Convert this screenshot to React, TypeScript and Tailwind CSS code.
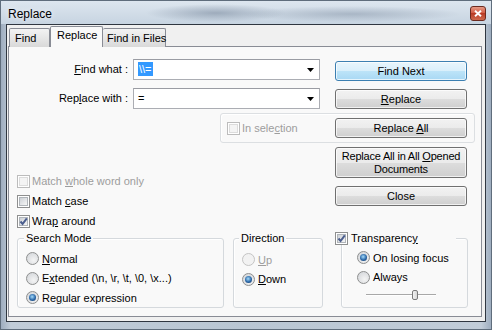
import React from "react";
import clsx from "clsx";

const U = ({ c }: { c: string }) => <span className="underline underline-offset-[1px]">{c}</span>;

function Check({ checked, disabled }: { checked?: boolean; disabled?: boolean }) {
    return (
        <span
            className={clsx(
                "relative flex h-[13px] w-[13px] shrink-0 border bg-white p-[1px]",
                disabled ? "border-[#bcbcbc]" : "border-[#8e8f8f]"
            )}
        >
            <span
                className={clsx(
                    "block h-full w-full border",
                    disabled
                        ? "border-[#dcdcdc] bg-[#f4f4f4]"
                        : "border-[#b0b5ba] bg-[linear-gradient(135deg,#cdd1d6,#f6f6f6)]"
                )}
            />
            {checked && (
                <svg className="absolute left-0 top-0" width="11" height="11" viewBox="0 0 11 11">
                    <path d="M2.5 5.5 L4.6 8 L8.8 2.4" fill="none" stroke="#4b5e8e" strokeWidth="2" />
                </svg>
            )}
        </span>
    );
}

function Radio({ on, disabled }: { on?: boolean; disabled?: boolean }) {
    return (
        <span
            className={clsx(
                "flex h-[13px] w-[13px] shrink-0 items-center justify-center rounded-full border",
                disabled
                    ? "border-[#c4c4c4] bg-[#f2f2f2]"
                    : "border-[#8e8f8f] bg-[radial-gradient(circle_at_60%_65%,#f4f4f4,#cfd2d6)]"
            )}
        >
            {on && (
                <span className="block h-[7px] w-[7px] rounded-full bg-[radial-gradient(circle_at_45%_40%,#a6dcfb,#2b68a8_55%,#0e2c57)]" />
            )}
        </span>
    );
}

function Btn({ children, def, className }: { children: React.ReactNode; def?: boolean; className?: string }) {
    return (
        <div
            className={clsx(
                "flex w-[132px] shrink-0 items-center justify-center rounded-[3px] border text-center shadow-[inset_0_0_0_1px_rgba(255,255,255,0.7)]",
                def
                    ? "border-[#3c7fb1] bg-[linear-gradient(#e8f5fc,#d9effb_50%,#bde4f8_50%,#a8d8f4)]"
                    : "border-[#707070] bg-[linear-gradient(#f2f2f2,#ebebeb_50%,#dddddd_50%,#cfcfcf)]",
                className
            )}
        >
            {children}
        </div>
    );
}

function Combo({ children }: { children: React.ReactNode }) {
    return (
        <div className="ml-[5px] flex h-[21px] w-[187px] items-center border border-[#abadb3] border-t-[#9a9ca3] bg-white pl-[4px] pr-[5px]">
            <div className="flex-1">{children}</div>
            <svg width="7" height="4" viewBox="0 0 7 4">
                <path d="M0 0 H7 L3.5 4 Z" fill="#000" />
            </svg>
        </div>
    );
}

function Group({ label, className, children }: { label: React.ReactNode; className?: string; children: React.ReactNode }) {
    return (
        <div className={clsx("relative h-[70px] shrink-0 rounded-[3px] border border-[#d5d9dd] shadow-[inset_1px_1px_0_#fff]", className)}>
            {label}
            {children}
        </div>
    );
}

export default function App() {
    return (
        <div className="h-[330px] w-[492px] overflow-hidden border border-[#5f6d7c] bg-[linear-gradient(90deg,#9eadbf,#c1ccd8_2%,#b9c6d3_50%,#c1ccd8_98%,#9eadbf)] font-['Liberation_Sans',Arial,sans-serif] text-[11px] text-black">
            <div className="flex h-[23px] items-center justify-between bg-[radial-gradient(ellipse_70px_9px_at_215px_12px,rgba(95,112,135,0.45),transparent),radial-gradient(ellipse_110px_8px_at_350px_13px,rgba(95,112,135,0.35),transparent),linear-gradient(#dde6ef,#c7d4e1)] pl-[7px] pr-[5px]">
                <span className="pt-[2px] text-[12px] [text-shadow:0_0_6px_#fff]">Replace</span>
                <div className="mt-[2px] flex h-[15px] w-[16px] items-center justify-center rounded-[3px] border border-[#6b2a1f] bg-[linear-gradient(#e69a86,#d0563e_50%,#b93c26_50%,#cf6a4e)]">
                    <svg width="8" height="7" viewBox="0 0 8 7">
                        <path d="M1 0.8 L7 6.2 M7 0.8 L1 6.2" stroke="#fff" strokeWidth="1.9" />
                    </svg>
                </div>
            </div>

            <div className="ml-[5px] h-[298px] w-[480px] border border-[#2f3640] bg-[#f0f0f0]">
                <div className="relative z-10 mb-[-1px] ml-[2px] flex h-[22px] items-end whitespace-nowrap">
                    <div className="flex h-[19px] w-[41px] items-center rounded-t-[2px] border border-b-0 border-[#898c95] bg-[linear-gradient(#f3f3f3,#e6e6e6_50%,#d9d9d9)] pl-[5px]">
                        Find
                    </div>
                    <div className="flex h-[21px] w-[53px] items-center rounded-t-[2px] border border-b-0 border-[#898c95] bg-[#f9f9f9] pb-[3px] pl-[6px]">
                        Replace
                    </div>
                    <div className="flex h-[19px] w-[63px] items-center rounded-t-[2px] border border-b-0 border-l-0 border-[#898c95] bg-[linear-gradient(#f3f3f3,#e6e6e6_50%,#d9d9d9)] pl-[4px]">
                        <span>Find in Files</span>
                    </div>
                </div>

                <div className="ml-[1px] flex h-[271px] w-[474px] flex-col border border-[#898c95] bg-[#f9f9f9]">
                    <div className="mt-[12px] flex h-[21px]">
                        <div className="w-[119px] text-right leading-[21px]">
                            <U c="F" />ind what :
                        </div>
                        <Combo>
                            <span className="bg-[#3399ff] px-[1px] py-[1px] text-white">\\=</span>
                        </Combo>
                        <Btn def className="ml-[15px] mt-[2px] h-[20px]">
                            <span>Find Next</span>
                        </Btn>
                    </div>

                    <div className="mt-[8px] flex h-[21px]">
                        <div className="w-[119px] text-right leading-[21px]">
                            Rep<U c="l" />ace with :
                        </div>
                        <Combo>=</Combo>
                        <Btn className="ml-[15px] mt-[1px] h-[20px]">
                            <span>
                                <U c="R" />eplace
                            </span>
                        </Btn>
                    </div>

                    <div className="ml-[211px] mt-[4px] flex h-[30px] w-[255px] items-center rounded-[3px] border border-[#dcdfe2] shadow-[inset_1px_1px_0_#fff]">
                        <div className="ml-[6px] flex items-center text-[#9d9d9d]">
                            <Check disabled />
                            <span className="ml-[2px]">
                                In sele<U c="c" />tion
                            </span>
                        </div>
                        <Btn className="ml-auto mr-[7px] h-[20px]">
                            <span>
                                Replace <U c="A" />ll
                            </span>
                        </Btn>
                    </div>

                    <div className="flex">
                        <div className="flex w-[326px] flex-col pl-[8px] pt-[28px]">
                            <div className="flex h-[20px] items-center text-[#9d9d9d]">
                                <Check disabled />
                                <span className="ml-[2px]">
                                    Match <U c="w" />hole word only
                                </span>
                            </div>
                            <div className="flex h-[20px] items-center">
                                <Check />
                                <span className="ml-[2px]">
                                    Match <U c="c" />ase
                                </span>
                            </div>
                            <div className="flex h-[20px] items-center">
                                <Check checked />
                                <span className="ml-[2px]">
                                    Wra<U c="p" /> around
                                </span>
                            </div>
                        </div>
                        <div className="flex flex-col pt-[4px]">
                            <Btn className="h-[31px] flex-col leading-[13px] tracking-[-0.2px]">
                                <span>
                                    Replace All in All <U c="O" />pened
                                </span>
                                <span>Documents</span>
                            </Btn>
                            <Btn className="mt-[8px] h-[20px]">
                                <span>Close</span>
                            </Btn>
                        </div>
                    </div>

                    <div className="ml-[8px] mt-[7px] flex">
                        <Group
                            className="w-[207px] pt-[10px]"
                            label={<span className="absolute left-[6px] top-[-7px] bg-[#f9f9f9] px-[2px] leading-[13px]">Search Mode</span>}
                        >
                            <div className="flex h-[19.5px] items-center pl-[8px]">
                                <Radio />
                                <span className="ml-[3px]">
                                    <U c="N" />ormal
                                </span>
                            </div>
                            <div className="flex h-[19.5px] items-center pl-[8px]">
                                <Radio />
                                <span className="ml-[3px]">
                                    E<U c="x" />tended (\n, \r, \t, \0, \x...)
                                </span>
                            </div>
                            <div className="flex h-[19.5px] items-center pl-[8px]">
                                <Radio on />
                                <span className="ml-[3px]">
                                    Re<U c="g" />ular expression
                                </span>
                            </div>
                        </Group>

                        <Group
                            className="ml-[9px] w-[90px] pt-[11px]"
                            label={<span className="absolute left-[5px] top-[-7px] bg-[#f9f9f9] px-[2px] leading-[13px]">Direction</span>}
                        >
                            <div className="flex h-[19.5px] items-center pl-[8px] text-[#9d9d9d]">
                                <Radio disabled />
                                <span className="ml-[3px]">
                                    <U c="U" />p
                                </span>
                            </div>
                            <div className="flex h-[19.5px] items-center pl-[8px]">
                                <Radio on />
                                <span className="ml-[3px]">
                                    <U c="D" />own
                                </span>
                            </div>
                        </Group>

                        <Group
                            className="ml-[18px] w-[127px] pt-[9px]"
                            label={
                                <div className="absolute left-[-7px] top-[-7px] flex h-[13px] w-[121px] items-center bg-[#f9f9f9]">
                                    <Check checked />
                                    <span className="ml-[3px]">
                                        Transparenc<U c="y" />
                                    </span>
                                </div>
                            }
                        >
                            <div className="flex h-[19.5px] items-center pl-[15px]">
                                <Radio on />
                                <span className="ml-[3px]">On losing focus</span>
                            </div>
                            <div className="flex h-[19.5px] items-center pl-[15px]">
                                <Radio />
                                <span className="ml-[3px]">Always</span>
                            </div>
                            <div className="flex h-[16px] items-center pl-[24px]">
                                <div className="relative h-[10px] w-[70px]">
                                    <div className="absolute left-0 top-[4px] h-[2px] w-full border-b border-t border-b-white border-t-[#a8a8a8]" />
                                    <div className="absolute left-[46px] top-0 h-[10px] w-[6px] rounded-[2px] border border-[#7a7a7a] bg-[linear-gradient(90deg,#f2f2f2,#d8d8d8)]" />
                                </div>
                            </div>
                        </Group>
                    </div>
                </div>
            </div>
        </div>
    );
}
